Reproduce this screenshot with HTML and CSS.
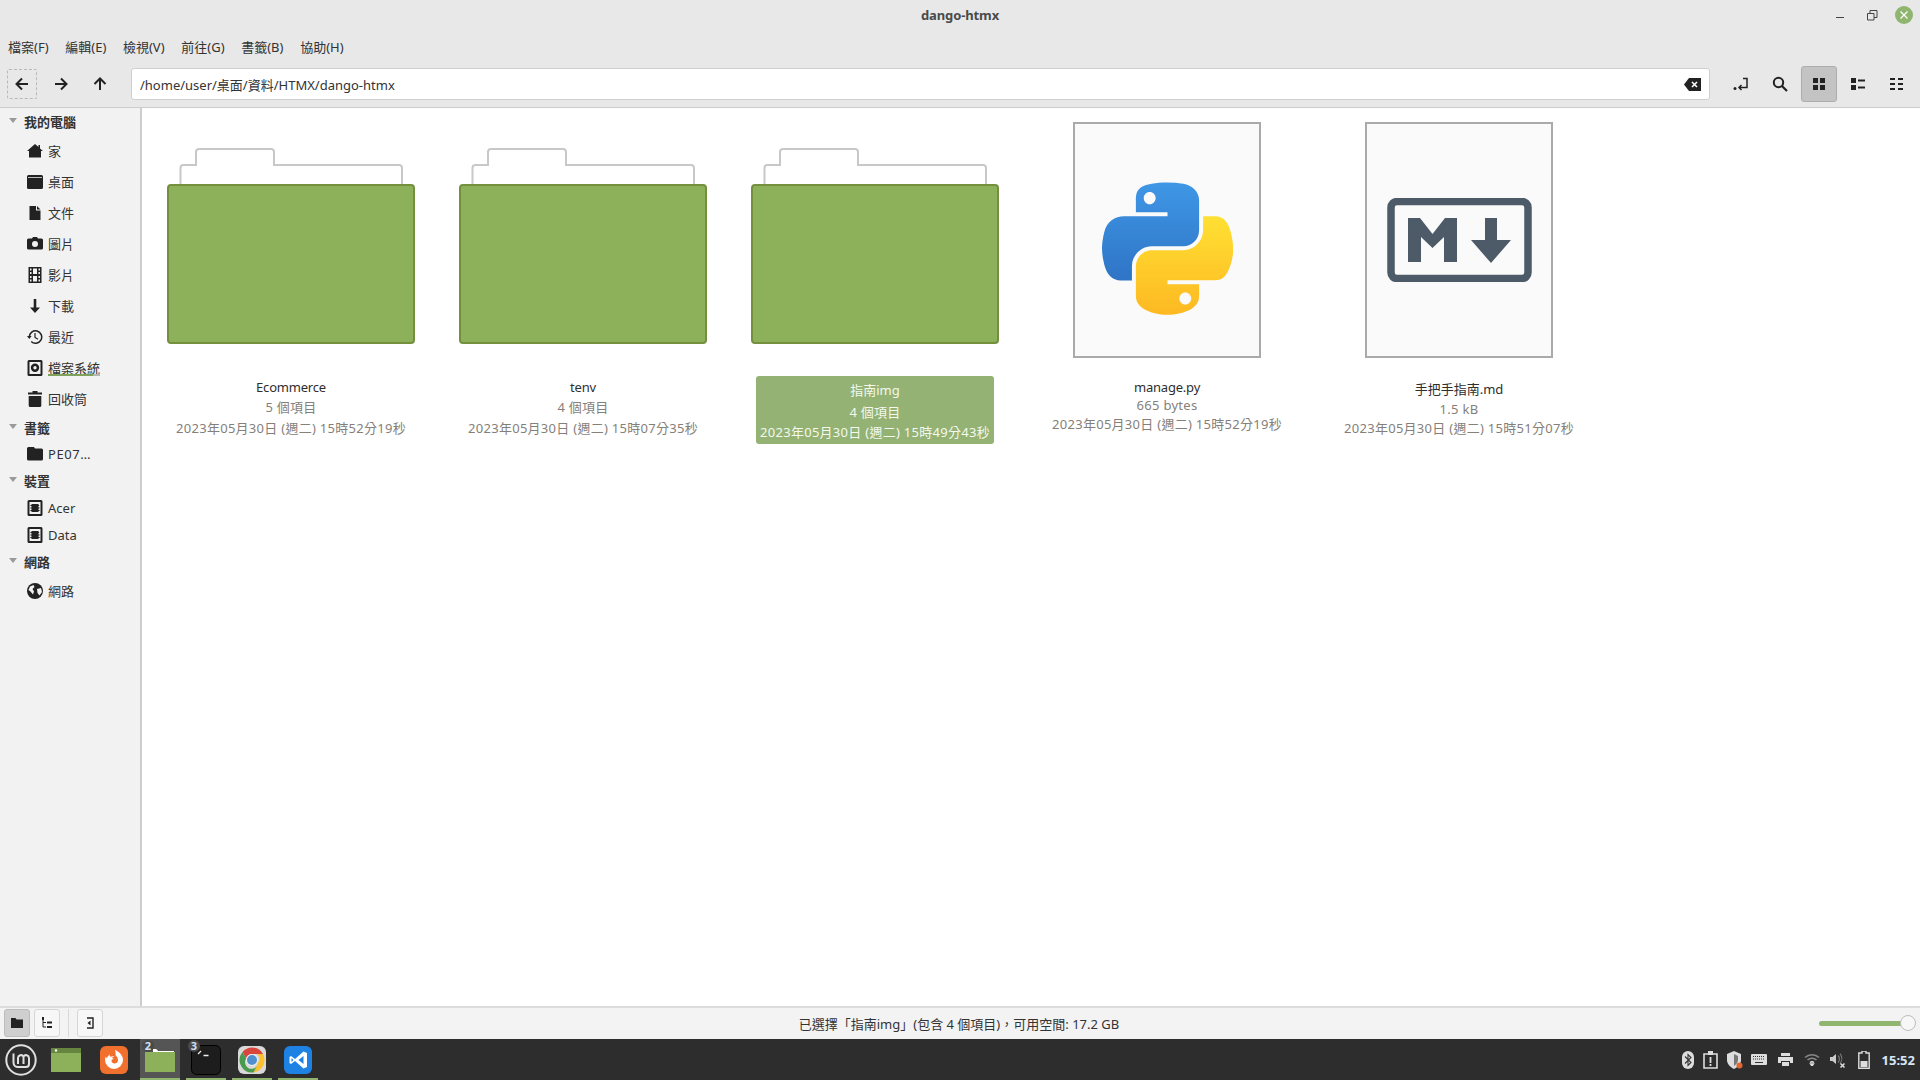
FILE: index.html
```html
<!DOCTYPE html>
<html lang="zh-Hant">
<head>
    <meta charset="UTF-8">
    <title>dango-htmx</title>
    <link rel="stylesheet" href="styles.css">
</head>
<body>
    <div class="window">
        <div class="titlebar">
            <span class="title">dango-htmx</span>
            <div class="winbtns">
                <svg class="winbtn" width="12" height="12" viewBox="0 0 12 12"><path d="M2 8.500h8" stroke="#444" fill="none"/></svg>
                <svg class="winbtn" width="12" height="12" viewBox="0 0 12 12"><path d="M1.500 4.500h6.500v6.500h-6.500zM4 4.500v-3h7v7h-3" stroke="#444" fill="none"/></svg>
                <svg class="winclose" width="18" height="18" viewBox="0 0 18 18"><circle cx="9" cy="9" r="9" fill="#8fb56f"/><path d="M5.500 5.500l7 7M12.500 5.500l-7 7" stroke="#fff" stroke-width="1.200"/></svg>
            </div>
        </div>

        <div class="menubar">
            <span>檔案(F)</span>
            <span>編輯(E)</span>
            <span>檢視(V)</span>
            <span>前往(G)</span>
            <span>書籤(B)</span>
            <span>協助(H)</span>
        </div>

        <div class="toolbar">
            <div class="navbtns">
                <button class="nav nav-focus"><svg width="14" height="14" viewBox="0 0 14 14"><path d="M13 7H2M7 1.500L1.500 7 7 12.500" stroke="#222" stroke-width="2" fill="none"/></svg></button>
                <button class="nav"><svg width="14" height="14" viewBox="0 0 14 14"><path d="M1 7h11M7 1.500L12.500 7 7 12.500" stroke="#222" stroke-width="2" fill="none"/></svg></button>
                <button class="nav"><svg width="14" height="14" viewBox="0 0 14 14"><path d="M7 13V2M1.500 7L7 1.500 12.500 7" stroke="#222" stroke-width="2" fill="none"/></svg></button>
            </div>
            <div class="pathbar">
                <span>/home/user/桌面/資料/HTMX/dango-htmx</span>
                <svg width="17" height="13" viewBox="0 0 17 13"><path d="M5 0h12v13H5L0 6.500z" fill="#222"/><path d="M8 4l5 5M13 4l-5 5" stroke="#fff" stroke-width="1.600"/></svg>
            </div>
            <div class="viewbtns">
                <button class="view"><svg width="16" height="16" viewBox="0 0 16 16"><circle cx="2" cy="12.500" r="1.500" fill="#222"/><path d="M10 2.500h4v9H6M8.500 9l-2.500 2.500L8.500 14" stroke="#222" stroke-width="1.500" fill="none"/></svg></button>
                <button class="view"><svg width="16" height="16" viewBox="0 0 16 16"><circle cx="6.500" cy="6.500" r="4.700" stroke="#222" stroke-width="2" fill="none"/><path d="M10 10l5 5" stroke="#222" stroke-width="2.200"/></svg></button>
                <button class="view view-on"><svg width="12" height="12" viewBox="0 0 12 12"><path d="M0 0h5v5H0zM7 0h5v5H7zM0 7h5v5H0zM7 7h5v5H7z" fill="#222"/></svg></button>
                <button class="view"><svg width="14" height="12" viewBox="0 0 14 12"><path d="M0 0h5v5H0zM0 7h5v5H0zM7 1.500h7v2H7zM7 8.500h7v2H7z" fill="#222"/></svg></button>
                <button class="view"><svg width="14" height="12" viewBox="0 0 14 12"><path d="M0 0h5v2H0zM0 5h5v2H0zM0 10h5v2H0zM8 0h5v2H8zM8 5h5v2H8zM8 10h5v2H8z" fill="#222"/></svg></button>
            </div>
        </div>

        <div class="main">
            <aside class="sidebar">
                <div class="side-head"><i class="caret"></i>我的電腦</div>
                <div class="side-row"><svg class="sico" viewBox="0 0 16 16"><path d="M8 1l3.500 3V2H13v3.500L16 8h-2v6.500H2V8H0z" fill="#222"/></svg><span>家</span></div>
                <div class="side-row"><svg class="sico" viewBox="0 0 16 16"><path d="M1.500 1h13a1.500 1.500 0 0 1 1.500 1.500v11a1.500 1.500 0 0 1-1.500 1.500h-13A1.500 1.500 0 0 1 0 13.500v-11A1.500 1.500 0 0 1 1.500 1zM1 3v.7h14V3z" fill="#222" fill-rule="evenodd"/></svg><span>桌面</span></div>
                <div class="side-row"><svg class="sico" viewBox="0 0 16 16"><path d="M2.500 1H9v4.500h4.500V15h-11zM10 1l3.500 3.500H10z" fill="#222"/></svg><span>文件</span></div>
                <div class="side-row"><svg class="sico" viewBox="0 0 16 16"><path fill-rule="evenodd" d="M5 2.500l1-1.500h4l1 1.500h3.500A1.500 1.500 0 0 1 16 4v8a1.500 1.500 0 0 1-1.500 1.500h-13A1.500 1.500 0 0 1 0 12V4a1.500 1.500 0 0 1 1.500-1.500zM8 5a3 3 0 1 0 0 6 3 3 0 0 0 0-6z" fill="#222"/></svg><span>圖片</span></div>
                <div class="side-row"><svg class="sico" viewBox="0 0 16 16"><path fill-rule="evenodd" d="M1.500 0h13v16h-13zM3 1.500v2h1.500v-2zM3 5v2h1.500V5zM3 9v2h1.500V9zM3 12.500v2h1.500v-2zM11.500 1.500v2H13v-2zM11.500 5v2H13V5zM11.500 9v2H13V9zM11.500 12.500v2H13v-2zM6 1.500V7h4V1.500zM6 9v5.500h4V9z" fill="#222"/></svg><span>影片</span></div>
                <div class="side-row"><svg class="sico" viewBox="0 0 16 16"><path d="M6.700 1h2.600v8.500h3.700L8 15 3 9.500h3.700z" fill="#222"/></svg><span>下載</span></div>
                <div class="side-row"><svg class="sico" viewBox="0 0 16 16"><path d="M2.300 8a6.200 6.200 0 1 1 1.900 4.500" stroke="#222" stroke-width="1.500" fill="none"/><path d="M0 7h4.600L2.300 10z" fill="#222"/><path d="M8 4v4.500l3 1.700" stroke="#222" stroke-width="1.200" fill="none"/></svg><span>最近</span></div>
                <div class="side-row"><svg class="sico" viewBox="0 0 16 16"><path fill-rule="evenodd" d="M2 0h12a1.500 1.500 0 0 1 1.500 1.500v13A1.500 1.500 0 0 1 14 16H2a1.500 1.500 0 0 1-1.500-1.500v-13A1.500 1.500 0 0 1 2 0zM2.500 2v12h11V2z" fill="#222"/><path fill-rule="evenodd" d="M8 3.500a4.200 4.200 0 1 0 0 8.400 4.200 4.200 0 0 0 0-8.400zM8 6a1.700 1.700 0 1 1 0 3.400A1.700 1.700 0 0 1 8 6z" fill="#222"/></svg><span class="fs-label">檔案系統<i class="fs-bar"></i></span></div>
                <div class="side-row"><svg class="sico" viewBox="0 0 16 16"><path d="M5.500 0h5v1.500H15v2H1v-2h4.500zM1.700 5h12.600v9.500a1.500 1.500 0 0 1-1.500 1.500H3.200a1.500 1.500 0 0 1-1.500-1.500z" fill="#222"/></svg><span>回收筒</span></div>

                <div class="side-head"><i class="caret"></i>書籤</div>
                <div class="side-row side-row-sm"><svg class="sico" viewBox="0 0 16 16"><path d="M1.500 1H7l1 1.500h6.500A1.500 1.500 0 0 1 16 4v9a1.500 1.500 0 0 1-1.500 1.500h-13A1.500 1.500 0 0 1 0 13V2.500A1.500 1.500 0 0 1 1.500 1z" fill="#222"/></svg><span class="bookmark">PE07…</span></div>

                <div class="side-head"><i class="caret"></i>裝置</div>
                <div class="side-row side-row-md"><svg class="sico" viewBox="0 0 16 16"><path fill-rule="evenodd" d="M2 0h12a1.500 1.500 0 0 1 1.500 1.500v13A1.500 1.500 0 0 1 14 16H2a1.500 1.500 0 0 1-1.500-1.500v-13A1.500 1.500 0 0 1 2 0zM2.500 2v12h11V2z" fill="#222"/><path d="M4.500 4h7v8h-7zM3.400 5h8.700v1H3.400zM3.400 7.500h9.200v1H3.400zM3.400 10h9.200v1H3.400z" fill="#222"/></svg><span>Acer</span></div>
                <div class="side-row side-row-md"><svg class="sico" viewBox="0 0 16 16"><path fill-rule="evenodd" d="M2 0h12a1.500 1.500 0 0 1 1.500 1.500v13A1.500 1.500 0 0 1 14 16H2a1.500 1.500 0 0 1-1.500-1.500v-13A1.500 1.500 0 0 1 2 0zM2.500 2v12h11V2z" fill="#222"/><path d="M4.500 4h7v8h-7zM3.400 5h8.700v1H3.400zM3.400 7.500h9.200v1H3.400zM3.400 10h9.200v1H3.400z" fill="#222"/></svg><span>Data</span></div>

                <div class="side-head"><i class="caret"></i>網路</div>
                <div class="side-row"><svg class="sico" viewBox="0 0 16 16"><circle cx="8" cy="8" r="8" fill="#222"/><path d="M3 3.500l3.500-1.500 1 2-2 2 1.500 2.500-1 3-2.500-3-2-1.500zM10 6l4-1 1 4-2.500 3.500L10.500 10z" fill="#f2f2f2"/></svg><span>網路</span></div>
            </aside>

            <section class="files">
                <div class="item">
                    <div class="thumb thumb-folder">
                        <svg width="248" height="196" viewBox="0 0 248 196"><path d="M13.500 37V20a3 3 0 0 1 3-3H29V4a3 3 0 0 1 3-3h72a3 3 0 0 1 3 3v13h125a3 3 0 0 1 3 3v17" stroke="#c8c8c8" stroke-width="2" fill="#fff"/><rect x="1" y="37" width="246" height="158" rx="3" fill="#8cb15a" stroke="#74903f" stroke-width="2"/></svg>
                    </div>
                    <div class="label">
                        <div class="name">Ecommerce</div>
                        <div class="meta meta-cjk">5 個項目</div>
                        <div class="meta">2023年05月30日 (週二) 15時52分19秒</div>
                    </div>
                </div>
                <div class="item">
                    <div class="thumb thumb-folder">
                        <svg width="248" height="196" viewBox="0 0 248 196"><path d="M13.500 37V20a3 3 0 0 1 3-3H29V4a3 3 0 0 1 3-3h72a3 3 0 0 1 3 3v13h125a3 3 0 0 1 3 3v17" stroke="#c8c8c8" stroke-width="2" fill="#fff"/><rect x="1" y="37" width="246" height="158" rx="3" fill="#8cb15a" stroke="#74903f" stroke-width="2"/></svg>
                    </div>
                    <div class="label">
                        <div class="name">tenv</div>
                        <div class="meta meta-cjk">4 個項目</div>
                        <div class="meta">2023年05月30日 (週二) 15時07分35秒</div>
                    </div>
                </div>
                <div class="item">
                    <div class="thumb thumb-folder">
                        <svg width="248" height="196" viewBox="0 0 248 196"><path d="M13.500 37V20a3 3 0 0 1 3-3H29V4a3 3 0 0 1 3-3h72a3 3 0 0 1 3 3v13h125a3 3 0 0 1 3 3v17" stroke="#c8c8c8" stroke-width="2" fill="#fff"/><rect x="1" y="37" width="246" height="158" rx="3" fill="#8cb15a" stroke="#74903f" stroke-width="2"/></svg>
                    </div>
                    <div class="label label-on">
                        <div class="name name-cjk">指南img</div>
                        <div class="meta meta-cjk">4 個項目</div>
                        <div class="meta">2023年05月30日 (週二) 15時49分43秒</div>
                    </div>
                </div>
                <div class="item">
                    <div class="thumb">
                        <div class="doc doc-py">
                            <svg width="131" height="133" viewBox="0 0 111 112">
                                <defs>
                                    <linearGradient id="pyblue" x1="0" y1="0" x2="0" y2="1"><stop offset="0" stop-color="#3f97e6"/><stop offset="1" stop-color="#2f74c6"/></linearGradient>
                                    <linearGradient id="pyyellow" x1="0" y1="0" x2="0" y2="1"><stop offset="0" stop-color="#ffe033"/><stop offset="1" stop-color="#fdb922"/></linearGradient>
                                </defs>
                                <path fill="url(#pyblue)" fill-rule="evenodd" d="M54.920 0C50.340.02 45.960.41 42.110 1.090 30.760 3.100 28.700 7.290 28.700 15.030V25.250H55.510v3.410H18.640C10.850 28.660 4.020 33.340 1.890 42.250-.57 52.460-.68 58.830 1.890 69.460 3.790 77.380 8.350 83.030 16.140 83.030h9.220V70.780C25.360 61.930 33.010 54.120 42.110 54.120H68.890C76.340 54.120 82.290 47.980 82.290 40.500V15.030C82.290 7.760 76.160 2.320 68.890 1.090 64.280.33 59.500-.02 54.920 0ZM40.420 8.220C43.190 8.220 45.450 10.520 45.450 13.340S43.190 18.430 40.420 18.430 35.380 16.150 35.380 13.340 37.630 8.220 40.420 8.220Z"/>
                                <path fill="url(#pyyellow)" fill-rule="evenodd" d="M85.640 28.660V40.500C85.640 49.680 77.850 57.410 68.890 57.410H42.110C34.770 57.410 28.700 63.690 28.700 71.040V96.560C28.700 103.820 35.010 108.090 42.110 110.180 50.600 112.680 58.750 113.130 68.890 110.180 75.630 108.230 82.290 104.300 82.290 96.560V86.340H55.510V82.930H95.700C103.490 82.930 106.390 77.490 109.100 69.340 111.900 60.950 111.780 52.880 109.100 42.120 107.180 34.370 103.500 28.660 95.700 28.660ZM70.580 93.310C73.360 93.310 75.610 95.590 75.610 98.410S73.360 103.520 70.580 103.520 65.550 101.220 65.550 98.410 67.810 93.310 70.580 93.310Z"/>
                            </svg>
                        </div>
                    </div>
                    <div class="label">
                        <div class="name">manage.py</div>
                        <div class="meta meta-sm">665 bytes</div>
                        <div class="meta">2023年05月30日 (週二) 15時52分19秒</div>
                    </div>
                </div>
                <div class="item">
                    <div class="thumb">
                        <div class="doc doc-md">
                            <svg width="145" height="84" viewBox="0 0 145 84"><rect x="4" y="3.500" width="137" height="77" rx="6" stroke="#4d5a68" stroke-width="7.500" fill="none"/><path d="M21 64V20H33L45.500 36 58 20H70V64H57V39L45.500 50 34 39V64ZM98 20H110V42H124L104 65 84 42H98Z" fill="#4d5a68"/></svg>
                        </div>
                    </div>
                    <div class="label">
                        <div class="name name-md">手把手指南.md</div>
                        <div class="meta meta-sm">1.5 kB</div>
                        <div class="meta">2023年05月30日 (週二) 15時51分07秒</div>
                    </div>
                </div>
            </section>
        </div>

        <div class="statusbar">
            <div class="status-left">
                <button class="sbtn sbtn-on"><svg width="12" height="10" viewBox="0 0 12 10"><path d="M0 0h4.500l1 1.500H12V10H0z" fill="#222"/></svg></button>
                <button class="sbtn"><svg width="12" height="12" viewBox="0 0 12 12"><path d="M1 0h2v3H1z" fill="#222"/><path d="M2 3v7h3M2 5.500h3" stroke="#222" fill="none"/><path d="M6 4.500h5v2H6zM6 9h5v2H6z" fill="#222"/></svg></button>
                <i class="sep"></i>
                <button class="sbtn"><svg width="10" height="12" viewBox="0 0 10 12"><path d="M2 1h6v10H2" stroke="#222" stroke-width="1.400" fill="none"/><path d="M5.500 3.500L2.500 6l3 2.500z" fill="#222"/></svg></button>
            </div>
            <div class="status-text">已選擇「指南img」(包含 4 個項目)，可用空間: 17.2 GB</div>
            <div class="zoom">
                <div class="zoom-track"></div>
                <div class="zoom-knob"></div>
            </div>
        </div>
    </div>

    <div class="panel">
        <div class="launchers">
            <div class="launcher launcher-menu">
                <svg width="32" height="32" viewBox="0 0 32 32"><circle cx="16" cy="16" r="14.700" stroke="#e0e0e0" stroke-width="2" fill="none"/><path d="M8.500 9.500v9a4.500 4.500 0 0 0 4.500 4.500h8a3 3 0 0 0 3-3v-6a3 3 0 0 0-5.500-1.500 3 3 0 0 0-5.500 1.500v6M18.500 13v7" stroke="#e0e0e0" stroke-width="2" fill="none"/></svg>
            </div>
            <div class="launcher launcher-folder">
                <svg width="30" height="24" viewBox="0 0 30 24"><path d="M0 0h30v5H0z" fill="#66853f"/><path d="M0 5h30v19H0z" fill="#8cb15a"/><circle cx="5" cy="2.500" r="1.200" fill="#fff"/></svg>
            </div>
            <div class="launcher launcher-firefox">
                <svg width="28" height="28" viewBox="0 0 28 28"><rect width="28" height="28" rx="6" fill="#f2702e"/><path d="M15.500 4c1.500 1.200 4.500 2.500 5.500 4.500 1.500 2 2 3.500 2 5.500a9 9 0 1 1-18 0c0-1.200.3-2.500.8-3.500.2.800.6 1.300 1.200 1.700.4-1.700 1.500-3 3-3.700-.4 1-.3 1.700 0 2.300 1.500-.7 3-.8 4.500-.3-1.200.2-2.200.7-2.700 1.500.8 0 1.500.4 1.700 1-1 .2-2 .7-2 1.700 0 1.500 1.300 2.800 3 2.800 1.800 0 3.300-1.300 3.500-3 .2-2-1-4.200-2.500-5.500.4-1.200.2-3-.5-5z" fill="#fff"/></svg>
            </div>
            <div class="launcher launcher-on">
                <span class="badge">2</span>
                <svg width="30" height="24" viewBox="0 0 30 24"><path d="M8 1h3l1 2h17v3H8z" fill="#fff"/><path d="M0 4h30v20H0z" fill="#8cb15a"/><path d="M9 1.500h3l1 1.500h15v1H9z" fill="#fff"/></svg>
                <i class="underline"></i>
            </div>
            <div class="launcher">
                <span class="badge">3</span>
                <svg width="30" height="30" viewBox="0 0 30 30"><rect x=".5" y=".5" width="29" height="29" rx="5" fill="#1d1d1d" stroke="#000"/><path d="M7 9l3-3M12.500 10.500h5" stroke="#eee" stroke-width="1.300"/></svg>
                <i class="underline"></i>
            </div>
            <div class="launcher">
                <svg width="28" height="28" viewBox="0 0 28 28"><rect width="28" height="28" rx="6" fill="#d9d9d9"/><path d="M14 1.500A12.500 12.500 0 0 1 25 8H14a6 6 0 0 0-5.800 4.500L4.500 6A12.500 12.500 0 0 1 14 1.500z" fill="#d9463d"/><path d="M25 8a12.500 12.500 0 0 1-9.500 18.400L20 17a6 6 0 0 0-1-9z" fill="#fbc02d"/><path d="M4.500 6A12.500 12.500 0 0 0 15.500 26.400L19 20a6 6 0 0 1-10.800-7.500z" fill="#4a9b4f"/><circle cx="14" cy="14" r="6" fill="#eee"/><circle cx="14" cy="14" r="5" fill="#4f8fd0"/></svg>
                <i class="underline"></i>
            </div>
            <div class="launcher">
                <svg width="28" height="28" viewBox="0 0 28 28"><rect width="28" height="28" rx="6" fill="#1e82e4"/><path d="M19.500 5.500L11 13 7 10 5.500 11v6l1.500 1 4-3 8.500 7.500L23 21V7zM19.500 10v8l-5-4zM7.500 12l2 2-2 2z" fill="#fff" fill-rule="evenodd"/></svg>
                <i class="underline"></i>
            </div>
        </div>
        <div class="tray">
            <svg width="12" height="18" viewBox="0 0 12 18"><rect width="12" height="18" rx="6" fill="#ddd"/><path d="M3 5.500l6 6L6 14.500V3.500l3 3-6 6" stroke="#333" stroke-width="1.100" fill="none"/></svg>
            <svg width="15" height="18" viewBox="0 0 15 18"><path d="M1 3h13v14H1z" stroke="#ddd" stroke-width="1.600" fill="none"/><path d="M5 0h5v4H5z" fill="#ddd"/><path d="M7.500 6v6M7.500 13v2" stroke="#ddd" stroke-width="1.800"/></svg>
            <svg width="17" height="18" viewBox="0 0 17 18"><path d="M8 0l7 3v6c0 4-3 7-7 9-4-2-7-5-7-9V3z" fill="#ddd"/><path d="M8 3l4 2v4c0 2.500-2 4.500-4 6z" fill="#777"/><circle cx="13.500" cy="14.500" r="3" fill="#e5652f"/></svg>
            <svg width="16" height="12" viewBox="0 0 16 12"><rect width="16" height="11" rx="1" fill="#ddd"/><path d="M2 2.500h12M2 5h12" stroke="#333" stroke-dasharray="1 1"/><path d="M4 8.500h8" stroke="#333"/></svg>
            <svg width="15" height="13" viewBox="0 0 15 13"><path d="M3 0h9v3H3zM0 4h15v6h-3V8H3v2H0zM4 9h7v4H4z" fill="#ddd"/></svg>
            <svg width="16" height="13" viewBox="0 0 16 13"><path d="M1 4.500a10 10 0 0 1 14 0M3.500 7a6.500 6.500 0 0 1 9 0" stroke="#888" stroke-width="1.500" fill="none"/><path d="M6 9.500a3 3 0 0 1 4 0M8 13l-1.500-2h3z" stroke="#ddd" stroke-width="1.300" fill="#ddd"/></svg>
            <svg width="16" height="16" viewBox="0 0 16 16"><path d="M0 5h2.500L6 2v10L2.500 9H0z" fill="#ccc"/><path d="M8 3.500a5 5 0 0 1 0 7M10 1.500a8 8 0 0 1 0 10" stroke="#777" stroke-width="1.200" fill="none"/><path d="M10.500 11.500l4 4M14.500 11.500l-4 4" stroke="#ddd" stroke-width="1.500"/></svg>
            <svg width="12" height="18" viewBox="0 0 12 18"><path d="M4 0h4v2h3.200v15.200H.8V2H4z" stroke="#ddd" stroke-width="1.400" fill="none"/><path d="M2.500 10h7v6h-7z" fill="#ddd"/></svg>
            <span class="clock">15:52</span>
        </div>
    </div>
</body>
</html>
```
FILE: styles.css
```css
* {
    box-sizing: border-box;
}

html, body {
    height: 100%;
}

body {
    margin: 0;
    width: 1920px;
    height: 1080px;
    overflow: hidden;
    display: flex;
    flex-direction: column;
    font-family: "Noto Sans", "Noto Sans CJK TC", sans-serif;
    font-size: 13px;
    color: #2e2e2e;
    background-color: #fff;
}

button {
    padding: 0;
    border: 0;
    background: none;
    display: flex;
    align-items: center;
    justify-content: center;
}

.window {
    height: 1039px;
    display: flex;
    flex-direction: column;
}

/* Title bar */
.titlebar {
    height: 30px;
    flex: none;
    position: relative;
    display: flex;
    align-items: center;
    justify-content: center;
    background-color: #e8e8e8;
}

.title {
    font-weight: 700;
    color: #4a4a4a;
    letter-spacing: -0.1px;
}

.winbtns {
    position: absolute;
    right: 7px;
    top: 6px;
    display: flex;
    align-items: center;
    gap: 20px;
}

.winclose {
    margin-left: -3px;
}

/* Menu */
.menubar {
    height: 32px;
    flex: none;
    display: flex;
    align-items: center;
    padding-left: 8px;
    gap: 16.7px;
    background-color: #e8e8e8;
    color: #333;
}

/* Toolbar */
.toolbar {
    height: 46px;
    flex: none;
    display: flex;
    align-items: flex-start;
    padding: 6px 0 0 7px;
    background-color: #e8e8e8;
    border-bottom: 1px solid #cdcdcd;
}

.navbtns {
    display: flex;
    gap: 9px;
    margin-top: 1px;
}

.nav {
    width: 30px;
    height: 30px;
    border: 1px solid transparent;
}

.nav-focus {
    border: 1px dashed #b8b8b8;
    border-radius: 2px;
}

.pathbar {
    width: 1579px;
    height: 32px;
    margin-left: 16px;
    padding: 0 8px;
    display: flex;
    align-items: center;
    justify-content: space-between;
    background-color: #fff;
    border: 1px solid #cfcfcf;
    border-radius: 3px;
    color: #333;
}

.viewbtns {
    display: flex;
    margin-left: 13px;
    margin-top: -2px;
    gap: 3px;
}

.view {
    width: 36px;
    height: 36px;
    border: 1px solid transparent;
    border-radius: 3px;
}

.view-on {
    background-color: #c3c3c3;
    border-color: #adadad;
}

/* Main area */
.main {
    flex: 1;
    display: flex;
    min-height: 0;
}

.sidebar {
    width: 142px;
    flex: none;
    background-color: #f2f2f2;
    border-right: 2px solid #cdcdcd;
}

.side-head {
    height: 27px;
    padding-left: 24px;
    display: flex;
    align-items: center;
    font-weight: 700;
    color: #333;
    position: relative;
}

.caret {
    position: absolute;
    left: 9px;
    top: 10px;
    border-style: solid;
    border-width: 5px 4.5px 0;
    border-color: #9a9a9a transparent transparent;
}

.side-row {
    height: 31px;
    display: flex;
    align-items: center;
    padding-left: 27px;
    gap: 5px;
    color: #333;
}

.side-row-sm {
    height: 26px;
}

.side-row-md {
    height: 27px;
}

.bookmark {
    letter-spacing: 0.6px;
}

.sico {
    width: 16px;
    height: 16px;
    flex: none;
}

.fs-label {
    position: relative;
}

.fs-bar {
    position: absolute;
    left: 0;
    right: 0;
    bottom: 1px;
    height: 2px;
    background: linear-gradient(to right, #7ea25a 87%, #b5b5b5 87%);
}

/* File grid */
.files {
    flex: 1;
    display: flex;
    align-items: flex-start;
    padding: 14px 0 0 3px;
    background-color: #fff;
}

.item {
    width: 292px;
    display: flex;
    flex-direction: column;
    align-items: center;
}

.thumb {
    height: 236px;
    display: flex;
    justify-content: center;
}

.thumb-folder {
    padding-top: 26px;
}

.doc {
    width: 188px;
    height: 236px;
    background-color: #fafafa;
    border: 2px solid #aaa;
    display: flex;
    justify-content: center;
}

.doc-py {
    padding-top: 58px;
}

.doc-md {
    padding-top: 74px;
}

.label {
    width: 238px;
    margin-top: 18px;
    padding-top: 2px;
    padding-bottom: 2px;
    text-align: center;
    border-radius: 3px;
    color: #857f7a;
    white-space: nowrap;
}

.label-on {
    background-color: #93b273;
    color: #f4f8ee;
    padding-top: 3px;
}

.name {
    height: 18px;
    line-height: 18px;
    color: #2e2e2e;
    letter-spacing: -0.2px;
}

.name-cjk {
    height: 22px;
    line-height: 22px;
    color: #f4f8ee;
    letter-spacing: 0;
}

.name-md {
    height: 22px;
    line-height: 22px;
    letter-spacing: 0;
}

.meta {
    height: 20px;
    line-height: 20px;
    letter-spacing: 0.28px;
}

.meta-cjk {
    height: 21px;
    line-height: 21px;
    margin-top: 1px;
}

.label-on .meta-cjk {
    margin-bottom: -1px;
}

.meta-sm {
    height: 18px;
    line-height: 18px;
}

/* Status bar */
.statusbar {
    height: 33px;
    flex: none;
    position: relative;
    display: flex;
    align-items: center;
    justify-content: center;
    background-color: #f3f3f3;
    border-top: 2px solid #dcdcdc;
}

.status-left {
    position: absolute;
    left: 4px;
    top: 1px;
    display: flex;
    align-items: center;
    gap: 4px;
}

.sbtn {
    width: 26px;
    height: 28px;
    border: 1px solid #d6d6d6;
    border-radius: 3px;
    background-color: #f7f7f7;
}

.sbtn-on {
    background-color: #cfcfcf;
    border-color: #bcbcbc;
}

.sep {
    width: 1px;
    height: 28px;
    margin: 0 4px;
    background-color: #d8d8d8;
}

.status-text {
    margin-left: -2px;
    color: #333;
}

.zoom {
    position: absolute;
    left: 1819px;
    top: 6px;
    width: 98px;
    height: 18px;
}

.zoom-track {
    position: absolute;
    left: 0;
    top: 7px;
    width: 90px;
    height: 5px;
    border-radius: 3px;
    background-color: #8fb56f;
}

.zoom-knob {
    position: absolute;
    right: 1px;
    top: 1px;
    width: 16px;
    height: 16px;
    border-radius: 50%;
    background-color: #f7f7f7;
    border: 1px solid #bdbdbd;
}

/* Panel */
.panel {
    height: 41px;
    flex: none;
    display: flex;
    justify-content: space-between;
    background-color: #2d2d2d;
}

.launchers {
    display: flex;
    padding-left: 1px;
    gap: 6px;
}

.launcher {
    width: 40px;
    height: 41px;
    position: relative;
    display: flex;
    align-items: center;
    justify-content: center;
}

.launcher-menu {
    margin-right: -2px;
}

.launcher-folder {
    margin-left: 1px;
}

.launcher-firefox {
    margin-left: 2px;
}

.launcher-on {
    background-color: #555;
}

.badge {
    position: absolute;
    left: 2px;
    top: 1px;
    width: 12px;
    height: 12px;
    border-radius: 50%;
    background-color: #4a4a4a;
    color: #cfe0f2;
    font-size: 11px;
    font-weight: 700;
    line-height: 12px;
    text-align: center;
}

.underline {
    position: absolute;
    left: 0;
    right: 0;
    bottom: 0;
    height: 2px;
    background-color: #8fb56f;
}

.tray {
    display: flex;
    align-items: center;
    padding-right: 5px;
}

.tray svg:nth-child(2) { margin-left: 9.5px; }
.tray svg:nth-child(3) { margin-left: 8px; }
.tray svg:nth-child(4) { margin-left: 7.5px; }
.tray svg:nth-child(5) { margin-left: 11.5px; }
.tray svg:nth-child(6) { margin-left: 10.5px; }
.tray svg:nth-child(7) { margin-left: 10px; }
.tray svg:nth-child(8) { margin-left: 12px; }

.clock {
    font-weight: 700;
    color: #d6e6f6;
    margin-left: 12px;
}
```
